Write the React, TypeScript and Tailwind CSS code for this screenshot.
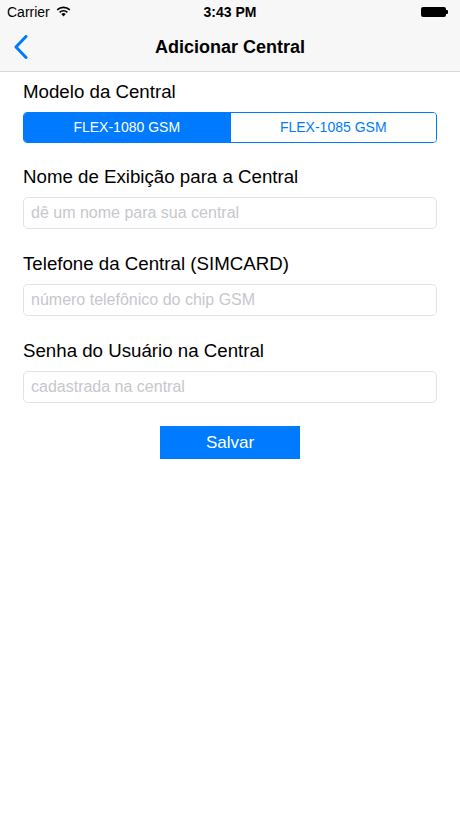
import { useState } from 'react';

const fields = [
  { label: 'Nome de Exibição para a Central', placeholder: 'dê um nome para sua central' },
  { label: 'Telefone da Central (SIMCARD)', placeholder: 'número telefônico do chip GSM' },
  { label: 'Senha do Usuário na Central', placeholder: 'cadastrada na central' },
];

const models = ['FLEX-1080 GSM', 'FLEX-1085 GSM'];

export default function App() {
  const [model, setModel] = useState(0);

  return (
    <div className="min-h-[818px] w-[460px] bg-white font-['Liberation_Sans',Arial,sans-serif] text-black">
      {/* Status + nav bar */}
      <div className="bg-[#f7f7f7] border-b border-[#d8d8d8]">
        <div className="h-[24px] flex items-center justify-between px-[7px] text-[14px]">
          <div className="flex items-center gap-[6px]">
            <span>Carrier</span>
            <svg width="15" height="11" viewBox="0 0 15 11" className="mt-[-2px]">
              <path d="M7.5 10.5 L5.3 8.1 A3.2 3.2 0 0 1 9.7 8.1 Z" fill="#000" />
              <path d="M3.6 6.4 A5.6 5.6 0 0 1 11.4 6.4" stroke="#000" strokeWidth="1.6" fill="none" />
              <path d="M1.2 3.9 A9 9 0 0 1 13.8 3.9" stroke="#000" strokeWidth="1.6" fill="none" />
            </svg>
          </div>
          <span className="font-bold absolute left-0 right-0 text-center pointer-events-none text-[14px]">3:43 PM</span>
          <div className="flex items-center mr-[5px]">
            <div className="w-[25px] h-[10px] bg-black rounded-[2px]" />
            <div className="w-[2px] h-[4px] bg-black rounded-r-[1px]" />
          </div>
        </div>
        <div className="h-[47px] relative flex items-center justify-center">
          <svg width="16" height="24" viewBox="0 0 16 24" className="absolute left-[13px] top-[11px]">
            <path d="M13 1.5 L3 12 L13 22.5" stroke="#007aff" strokeWidth="3" fill="none" strokeLinecap="round" strokeLinejoin="round" />
          </svg>
          <span className="text-[18px] font-bold">Adicionar Central</span>
        </div>
      </div>

      {/* Form */}
      <div className="px-[23px] pt-[6px] flex flex-col">
        <label className="text-[18.7px] leading-[24px] h-[28px] flex items-center">Modelo da Central</label>
        <div className="mt-[6px] h-[31px] flex border border-[#007aff] rounded-[4px] overflow-hidden">
          {models.map((m, i) => (
            <button
              key={m}
              type="button"
              onClick={() => setModel(i)}
              className={`flex-1 text-[14px] ${i > 0 ? 'border-l border-[#007aff]' : ''} ${
                model === i ? 'bg-[#007aff] text-white' : 'bg-white text-[#007aff]'
              }`}
            >
              {m}
            </button>
          ))}
        </div>

        {fields.map((f, idx) => (
          <div key={f.label} className="flex flex-col">
            <label
              className={`${idx === 0 ? 'mt-[19px]' : 'mt-[20px]'} text-[18.7px] leading-[24px] h-[30px] flex items-center`}
            >
              {f.label}
            </label>
            <input
              type="text"
              placeholder={f.placeholder}
              className="mt-[5px] h-[32px] rounded-[5px] border border-[#e3e3e3] px-[7px] text-[16px] placeholder-[#c7c7cd] outline-none"
            />
          </div>
        ))}

        <div className="mt-[23px] flex justify-center">
          <button type="button" className="w-[140px] h-[33px] bg-[#007aff] text-white text-[17px]">
            Salvar
          </button>
        </div>
      </div>
    </div>
  );
}
